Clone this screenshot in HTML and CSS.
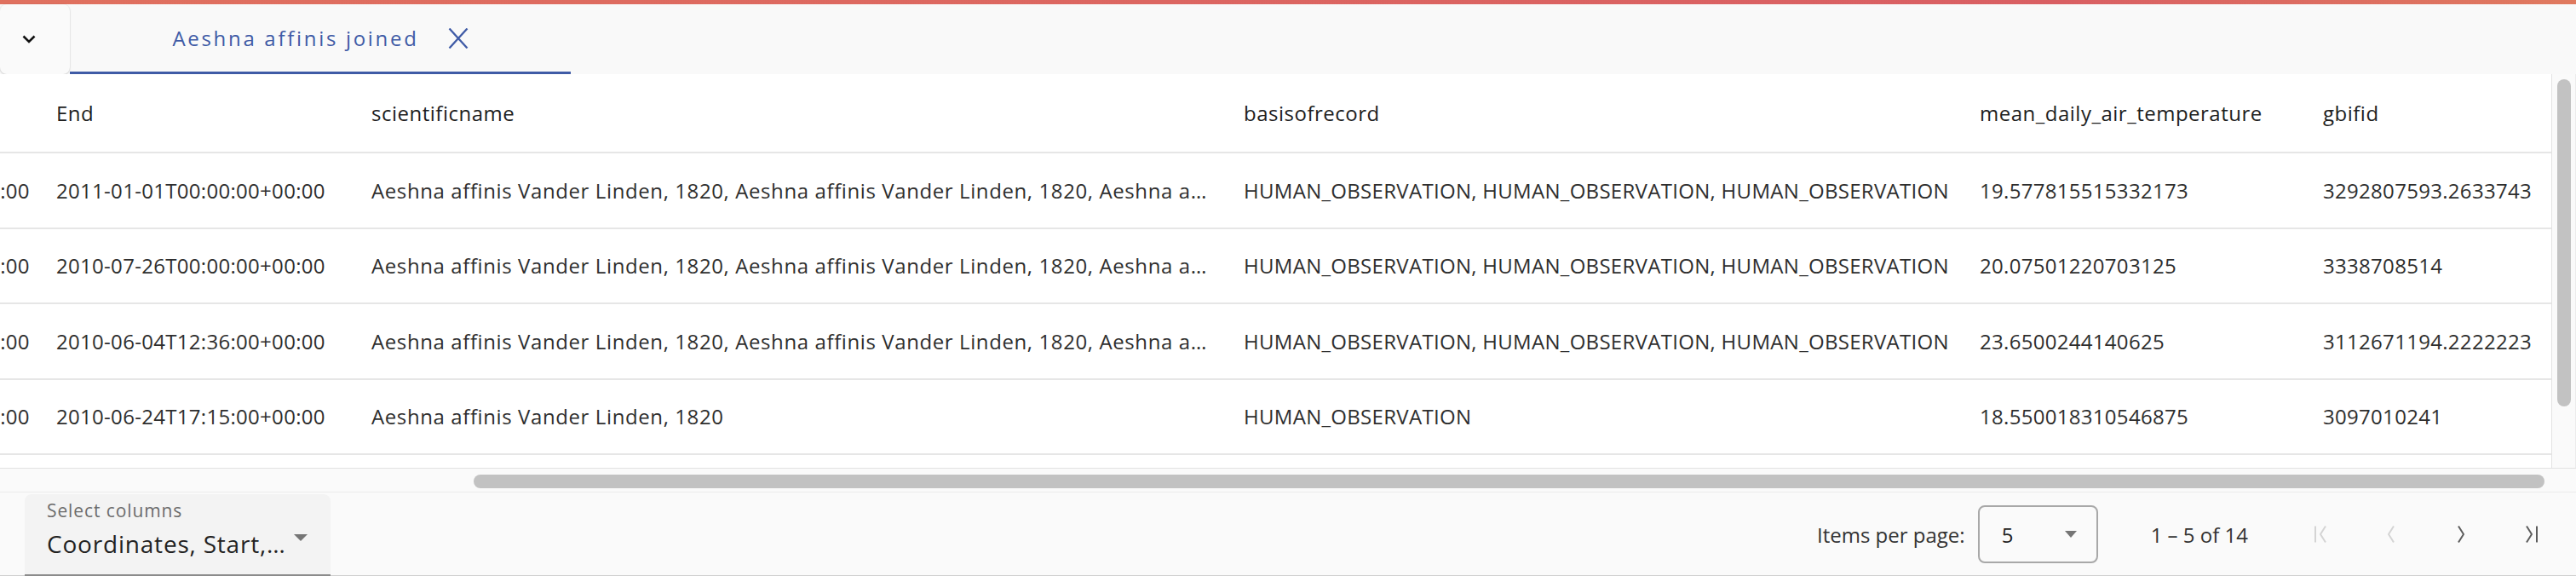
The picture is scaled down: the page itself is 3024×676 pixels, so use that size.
FILE: index.html
```html
<!DOCTYPE html>
<html lang="en">
<head>
<meta charset="utf-8">
<title>Aeshna affinis joined</title>
<link rel="stylesheet" href="styles.css">
</head>
<body>
<div class="accent"></div>
<nav class="tabbar">
  <button class="toggle" aria-label="Collapse">
    <svg viewBox="0 0 16 10" width="16" height="10"><polyline points="1.5,1.5 8,8 14.5,1.5"/></svg>
  </button>
  <div class="tab is-active">
    <span class="tab-label">Aeshna affinis joined</span>
    <svg class="tab-close" viewBox="0 0 24 24" width="24" height="24"><path d="M1.5 0.5 L22.5 23.5 M22.5 0.5 L1.5 23.5"/></svg>
  </div>
</nav>

<section class="data">
  <div class="data-main">
    <div class="viewport">
      <table class="grid">
        <colgroup>
          <col class="c-coord"><col class="c-start"><col class="c-end"><col class="c-sci"><col class="c-basis"><col class="c-temp"><col class="c-gbif">
        </colgroup>
        <thead>
          <tr><th>Coordinates</th><th>Start</th><th>End</th><th>scientificname</th><th>basisofrecord</th><th>mean_daily_air_temperature</th><th>gbifid</th></tr>
        </thead>
        <tbody>
          <tr>
            <td>POINT (5.6431 51.9852)</td>
            <td>2010-01-01T00:00:00+00:00</td>
            <td>2011-01-01T00:00:00+00:00</td>
            <td class="sci" title="Aeshna affinis Vander Linden, 1820, Aeshna affinis Vander Linden, 1820, Aeshna affinis Vander Linden, 1820">Aeshna affinis Vander Linden, 1820, Aeshna affinis Vander Linden, 1820, Aeshna a…</td>
            <td>HUMAN_OBSERVATION, HUMAN_OBSERVATION, HUMAN_OBSERVATION</td>
            <td>19.577815515332173</td>
            <td>3292807593.2633743</td>
          </tr>
          <tr>
            <td>POINT (4.8897 52.3740)</td>
            <td>2010-07-26T00:00:00+00:00</td>
            <td>2010-07-26T00:00:00+00:00</td>
            <td class="sci" title="Aeshna affinis Vander Linden, 1820, Aeshna affinis Vander Linden, 1820, Aeshna affinis Vander Linden, 1820">Aeshna affinis Vander Linden, 1820, Aeshna affinis Vander Linden, 1820, Aeshna a…</td>
            <td>HUMAN_OBSERVATION, HUMAN_OBSERVATION, HUMAN_OBSERVATION</td>
            <td>20.07501220703125</td>
            <td>3338708514</td>
          </tr>
          <tr>
            <td>POINT (6.5665 53.2194)</td>
            <td>2010-06-04T12:36:00+00:00</td>
            <td>2010-06-04T12:36:00+00:00</td>
            <td class="sci" title="Aeshna affinis Vander Linden, 1820, Aeshna affinis Vander Linden, 1820, Aeshna affinis Vander Linden, 1820">Aeshna affinis Vander Linden, 1820, Aeshna affinis Vander Linden, 1820, Aeshna a…</td>
            <td>HUMAN_OBSERVATION, HUMAN_OBSERVATION, HUMAN_OBSERVATION</td>
            <td>23.6500244140625</td>
            <td>3112671194.2222223</td>
          </tr>
          <tr>
            <td>POINT (5.1214 52.0907)</td>
            <td>2010-06-24T17:15:00+00:00</td>
            <td>2010-06-24T17:15:00+00:00</td>
            <td class="sci">Aeshna affinis Vander Linden, 1820</td>
            <td>HUMAN_OBSERVATION</td>
            <td>18.550018310546875</td>
            <td>3097010241</td>
          </tr>
          <tr class="row-peek">
            <td></td><td></td><td></td><td></td><td></td><td></td><td></td>
          </tr>
        </tbody>
      </table>
    </div>
    <div class="vscroll"><div class="vthumb" style="height:384px"></div></div>
  </div>
  <div class="hscroll"><div class="hthumb" style="margin-left:556px;width:2431px"></div></div>
</section>

<footer class="footer">
  <div class="select-field">
    <span class="select-label">Select columns</span>
    <div class="select-row">
      <span class="select-value">Coordinates, Start,…</span>
      <span class="caret"></span>
    </div>
  </div>
  <div class="paginator">
    <span class="pg-label">Items per page:</span>
    <div class="pg-select"><span>5</span><span class="caret caret-small"></span></div>
    <span class="pg-range">1 – 5 of 14</span>
    <button class="pg-btn" disabled aria-label="First page">
      <svg viewBox="0 0 24 24" width="24" height="24"><path d="M5 2.5 V21.5 M17 2.5 L11 12 L17 21.5"/></svg>
    </button>
    <button class="pg-btn" disabled aria-label="Previous page">
      <svg viewBox="0 0 24 24" width="24" height="24"><path d="M15 2.5 L9 12 L15 21.5"/></svg>
    </button>
    <button class="pg-btn" aria-label="Next page">
      <svg viewBox="0 0 24 24" width="24" height="24"><path d="M9 2.5 L15 12 L9 21.5"/></svg>
    </button>
    <button class="pg-btn" aria-label="Last page">
      <svg viewBox="0 0 24 24" width="24" height="24"><path d="M7 2.5 L13 12 L7 21.5 M19 2.5 V21.5"/></svg>
    </button>
  </div>
</footer>
</body>
</html>
```

FILE: styles.css
```css
html, body {
  margin: 0;
  padding: 0;
}

body {
  background: #fafafa;
  font-family: "Open Sans", "Liberation Sans", sans-serif;
  color: #333;
  overflow: hidden;
}

.accent {
  height: 5px;
  background: linear-gradient(90deg, #e0715f 0%, #dc6661 45%, #d95f63 80%, #e07a5f 100%);
}

/* ---------- tab bar ---------- */
.tabbar {
  display: flex;
  height: 82px;
  background: #f9f9f9;
}

.toggle {
  width: 82px;
  height: 82px;
  padding: 0 0 0 26px;
  border: 0;
  border-radius: 8px;
  background: #fafafa;
  box-shadow: 0 1px 2px rgba(0, 0, 0, 0.16), 0 0 0 1px rgba(0, 0, 0, 0.03);
  display: flex;
  align-items: center;
  justify-content: flex-start;
  box-sizing: border-box;
}

.toggle svg {
  fill: none;
  stroke: #111;
  stroke-width: 2.6;
}

.tab {
  width: 588px;
  box-sizing: border-box;
  border-bottom: 3px solid #3f5ba6;
  display: flex;
  align-items: center;
  justify-content: center;
  gap: 34px;
  color: #3f5ba6;
}

.tab-label {
  font-size: 24px;
  letter-spacing: 2.7px;
}

.tab-close {
  fill: none;
  stroke: #3f5ba6;
  stroke-width: 2.3;
}

/* ---------- data grid ---------- */
.data-main {
  display: flex;
  height: 462px;
}

.viewport {
  flex: 1;
  min-width: 0;
  overflow: hidden;
  display: flex;
  justify-content: flex-end;
  align-items: flex-start;
  background: #fff;
}

.grid {
  flex: none;
  width: 3680px;
  table-layout: fixed;
  border-collapse: separate;
  border-spacing: 0;
  font-size: 24px;
  letter-spacing: 0.3px;
}

.c-coord { width: 390px; }
.c-start { width: 347px; }
.c-end { width: 370px; }
.c-sci { width: 1024px; }
.c-basis { width: 864px; }
.c-temp { width: 403px; }
.c-gbif { width: 282px; }

.grid th,
.grid td {
  padding: 0 14px;
  text-align: left;
  vertical-align: middle;
  white-space: nowrap;
  overflow: hidden;
  text-overflow: clip;
  border-bottom: 2px solid #e6e6e6;
}

.grid td.sci {
  text-overflow: ellipsis;
  letter-spacing: 0.6px;
}

.grid thead tr { height: 93px; }
.grid tbody tr { height: 88.5px; }

.grid th {
  font-weight: 400;
  color: #1e1e1e;
  letter-spacing: 0.5px;
}

.grid td {
  color: #2e2e2e;
}

.vscroll {
  width: 29px;
  flex: none;
  box-sizing: border-box;
  background: #fafafa;
  border-left: 1px solid #e2e2e2;
  border-right: 1px solid #ececec;
  padding-top: 6px;
  display: flex;
  justify-content: center;
  align-items: flex-start;
}

.vthumb {
  width: 16px;
  border-radius: 8px;
  background: #c2c2c2;
}

.hscroll {
  height: 29px;
  box-sizing: border-box;
  background: #fafafa;
  border-top: 1px solid #e2e2e2;
  border-bottom: 1px solid #ececec;
  padding-top: 7px;
}

.hthumb {
  height: 16px;
  border-radius: 8px;
  background: #c2c2c2;
}

/* ---------- footer ---------- */
.footer {
  height: 98px;
  box-sizing: border-box;
  padding-left: 29px;
  display: flex;
  align-items: flex-end;
  justify-content: space-between;
  background: #fafafa;
  box-shadow: inset 0 -1px 0 #cfcfcf;
}

.select-field {
  width: 359px;
  height: 96px;
  box-sizing: border-box;
  padding: 6px 27px 0 26px;
  background: #f3f3f3;
  border-radius: 8px 8px 0 0;
  border-bottom: 2px solid #8b8b8b;
  display: flex;
  flex-direction: column;
}

.select-label {
  font-size: 21px;
  line-height: 26px;
  color: #6c6c6c;
  letter-spacing: 0.9px;
}

.select-row {
  margin-top: 8px;
  display: flex;
  align-items: center;
  justify-content: space-between;
}

.select-value {
  font-size: 28px;
  line-height: 36px;
  color: #222;
  letter-spacing: 0.8px;
  white-space: nowrap;
}

.caret {
  width: 0;
  height: 0;
  border-left: 8px solid transparent;
  border-right: 8px solid transparent;
  border-top: 8px solid #757575;
  margin-bottom: 14px;
}

.paginator {
  align-self: center;
  display: flex;
  align-items: center;
  margin-right: 12px;
  font-size: 24px;
  color: #333;
}

.pg-select {
  margin-left: 15px;
  width: 141px;
  height: 68px;
  box-sizing: border-box;
  border: 2px solid #a8a8a8;
  border-radius: 8px;
  padding: 0 23px 0 26px;
  display: flex;
  align-items: center;
  justify-content: space-between;
  color: #222;
}

.caret-small {
  border-left-width: 7px;
  border-right-width: 7px;
  border-top-width: 8px;
  margin-bottom: 0;
}

.pg-range {
  margin-left: 62px;
  margin-right: 45px;
}

.pg-btn {
  width: 82px;
  height: 64px;
  padding: 0;
  border: 0;
  background: transparent;
  display: flex;
  align-items: center;
  justify-content: center;
}

.pg-btn svg {
  fill: none;
  stroke: #5c5c5c;
  stroke-width: 2;
  stroke-linejoin: round;
}

.pg-btn:disabled svg {
  stroke: #d4d4d4;
}
```
